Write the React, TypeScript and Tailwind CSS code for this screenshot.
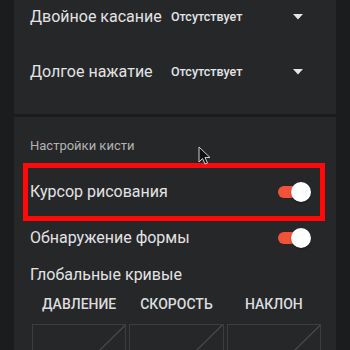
import React from "react";

function Toggle() {
  return (
    <div className="relative w-[33px] h-[20px] shrink-0">
      <div className="absolute left-0 top-[4px] w-[30px] h-[12px] rounded-full bg-[#f0523a]" />
      <div className="absolute right-0 top-0 w-[20px] h-[20px] rounded-full bg-white shadow-[0_1px_2px_rgba(0,0,0,0.4)]" />
    </div>
  );
}

function Caret() {
  return (
    <svg width="10" height="6" viewBox="0 0 10 6" className="shrink-0">
      <polygon points="0,0 10,0 5,5.5" fill="#e6e6e6" />
    </svg>
  );
}

function CurveBox() {
  return (
    <div className="h-[93px] border border-[#3c3d41]">
      <svg className="w-full h-full" viewBox="0 0 100 100" preserveAspectRatio="none">
        <line x1="0" y1="100" x2="100" y2="0" stroke="#4a4b4f" strokeWidth="1.2" vectorEffect="non-scaling-stroke" />
      </svg>
    </div>
  );
}

export default function App() {
  return (
    <div
      className="relative w-[350px] h-[350px] overflow-hidden bg-[#1b1c1e] px-[14px] text-[#e3e3e3]"
      style={{ fontFamily: "Roboto, 'Noto Sans', sans-serif" }}
    >
      {/* Card 1 */}
      <div className="h-[114px] bg-[#262729] flex flex-col pl-[16px] pr-[33px]">
        <div className="h-[34px] flex items-center">
          <div className="w-[141px] text-[16px]">Двойное касание</div>
          <div className="flex-1 text-[12.5px] font-medium">Отсутствует</div>
          <Caret />
        </div>
        <div className="h-[34px] mt-[21px] flex items-center">
          <div className="w-[141px] text-[16px]">Долгое нажатие</div>
          <div className="flex-1 text-[12.5px] font-medium">Отсутствует</div>
          <Caret />
        </div>
      </div>

      {/* Card 2 */}
      <div className="mt-[3px] h-[300px] bg-[#262729] flex flex-col">
        <div className="pl-[16px] pt-[21px] h-[16px] box-content text-[13px] leading-[16px] text-[#b3b3b3]">
          Настройки кисти
        </div>
        <div className="mt-[9px] ml-[9px] mr-[11px] h-[60px] border-[5px] border-[#ff0a0a] flex items-center pl-[2px] pr-[9px]">
          <div className="flex-1 text-[16px]">Курсор рисования</div>
          <Toggle />
        </div>
        <div className="h-[36px] flex items-center pl-[16px] pr-[25px]">
          <div className="flex-1 text-[16px]">Обнаружение формы</div>
          <Toggle />
        </div>
        <div className="mt-[8px] h-[24px] flex items-center pl-[16px] text-[16px]">
          Глобальные кривые
        </div>
        <div className="mt-[7px] ml-[18px] mr-[15px] grid grid-cols-3 gap-[3px]">
          <div className="h-[20px] flex items-center justify-center text-[14px] font-medium text-[#dcdcdc]">ДАВЛЕНИЕ</div>
          <div className="h-[20px] flex items-center justify-center text-[14px] font-medium text-[#dcdcdc]">СКОРОСТЬ</div>
          <div className="h-[20px] flex items-center justify-center text-[14px] font-medium text-[#dcdcdc]">НАКЛОН</div>
          <div className="mt-[7px]"><CurveBox /></div>
          <div className="mt-[7px]"><CurveBox /></div>
          <div className="mt-[7px]"><CurveBox /></div>
        </div>
      </div>

      {/* Mouse pointer */}
      <svg className="absolute left-[198px] top-[146px]" width="14" height="20" viewBox="0 0 14 20">
        <path d="M1 1 L1 16 L4.5 12.5 L7 18 L9.5 17 L7 11.5 L12 11.5 Z" fill="#111" stroke="#cfcfcf" strokeWidth="1" strokeLinejoin="round" />
      </svg>
    </div>
  );
}
